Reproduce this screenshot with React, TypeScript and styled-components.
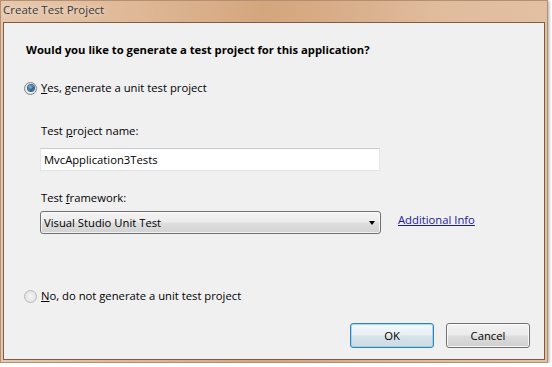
import styled, { createGlobalStyle } from "styled-components";

const GlobalStyle = createGlobalStyle`
  html, body {
    margin: 0;
    padding: 0;
    background: #ffffff;
  }
  body {
    font-family: "Open Sans", "Noto Sans", sans-serif;
    font-size: 11.25px;
    color: #000;
  }
`;

type RadioProps = {
  checked?: boolean;
};

const Radio = ({ checked }: RadioProps) => (
  <RadioCircle $checked={checked}>{checked && <RadioDot />}</RadioCircle>
);

const App = () => {
  return (
    <>
      <GlobalStyle />
      <Frame>
        <TitleBar>Create Test Project</TitleBar>
        <Client>
          <Question>
            Would you like to generate a test project for this application?
          </Question>
          <RadioRow $top={22}>
            <Radio checked />
            <span>
              <Key>Y</Key>es, generate a unit test project
            </span>
          </RadioRow>
          <Group>
            <FieldLabel $top={27}>
              Test <Key>p</Key>roject name:
            </FieldLabel>
            <TextBox>MvcApplication3Tests</TextBox>
            <FieldLabel $top={19}>
              Test <Key>f</Key>ramework:
            </FieldLabel>
            <ComboRow>
              <Combo>
                <span>Visual Studio Unit Test</span>
                <Arrow />
              </Combo>
              <InfoLink>Additional Info</InfoLink>
            </ComboRow>
          </Group>
          <RadioRow $top={54}>
            <Radio />
            <span>
              <Key>N</Key>o, do not generate a unit test project
            </span>
          </RadioRow>
          <ButtonBar>
            <Button $primary>OK</Button>
            <Button>Cancel</Button>
          </ButtonBar>
        </Client>
      </Frame>
    </>
  );
};

const Frame = styled.div`
  width: 548px;
  height: 363px;
  display: flex;
  flex-direction: column;
  box-sizing: border-box;
  background: linear-gradient(
    90deg,
    #e7c8ad 0%,
    #dfb896 25%,
    #d4a67e 48%,
    #d8ac87 60%,
    #e0bc9d 80%,
    #e2c0a2 100%
  );
  border: 1px solid #b58f72;
  box-shadow: 1px 1px 3px rgba(0, 0, 0, 0.35);
`;

const TitleBar = styled.div`
  height: 21px;
  padding-left: 2px;
  line-height: 17px;
  font-family: "Open Sans", "Noto Sans", sans-serif;
  font-size: 11.5px;
  color: #3a3a3a;
  text-shadow: 0 0 6px rgba(255, 255, 255, 0.8);
`;

const Client = styled.div`
  flex: 1;
  margin: 0 2px 2px 2px;
  display: flex;
  flex-direction: column;
  background: #f0f0f0;
  border: 1px solid #7d5d47;
  padding: 19px 14px 11px 22px;
`;

const Question = styled.div`
  font-weight: 700;
  line-height: 16px;
`;

const RadioRow = styled.div<{ $top: number }>`
  display: flex;
  align-items: center;
  gap: 4px;
  margin: ${(p) => p.$top}px 0 0 -2px;
  line-height: 16px;
`;

const RadioCircle = styled.span<{ $checked?: boolean }>`
  width: 11px;
  height: 11px;
  border-radius: 50%;
  display: flex;
  align-items: center;
  justify-content: center;
  border: 1px solid ${(p) => (p.$checked ? "#7f8284" : "#b8b9ba")};
  background: ${(p) =>
    p.$checked
      ? "radial-gradient(circle at 50% 50%, #ffffff 0%, #e8e8e8 70%, #d4d4d4 100%)"
      : "radial-gradient(circle at 50% 50%, #f4f4f4 0%, #e4e4e4 70%, #d8d8d8 100%)"};
`;

const RadioDot = styled.span`
  width: 6px;
  height: 6px;
  border-radius: 50%;
  background: radial-gradient(circle at 40% 35%, #7fc0e8 0%, #24689f 55%, #173f66 100%);
  box-shadow: 0 0 0 1px #3f5f7e;
`;

const Key = styled.span`
  text-decoration: underline;
`;

const Group = styled.div`
  display: flex;
  flex-direction: column;
  margin-left: 14px;
`;

const FieldLabel = styled.div<{ $top: number }>`
  margin: ${(p) => p.$top}px 0 0 1px;
  line-height: 16px;
`;

const TextBox = styled.div`
  width: 340px;
  height: 23px;
  box-sizing: border-box;
  margin-top: 9px;
  padding: 0 3px;
  background: #ffffff;
  border: 1px solid #e2e6eb;
  border-top-color: #c9ccd1;
  line-height: 21px;
`;

const ComboRow = styled.div`
  display: flex;
  align-items: center;
  gap: 17px;
  margin-top: 5px;
`;

const Combo = styled.div`
  width: 341px;
  height: 23px;
  box-sizing: border-box;
  display: flex;
  align-items: center;
  justify-content: space-between;
  padding: 0 5px 0 3px;
  border: 1px solid #707070;
  border-radius: 3px;
  background: linear-gradient(180deg, #f4f4f4 0%, #ececec 48%, #dedede 52%, #d2d2d2 100%);
  box-shadow: inset 0 0 0 1px rgba(255, 255, 255, 0.7);
`;

const Arrow = styled.span`
  width: 0;
  height: 0;
  border-left: 3.5px solid transparent;
  border-right: 3.5px solid transparent;
  border-top: 4px solid #000;
  margin-top: 1px;
`;

const InfoLink = styled.a`
  color: #1a1a9a;
  text-decoration: underline;
  cursor: pointer;
  margin-top: -6px;
`;

const ButtonBar = styled.div`
  margin-top: auto;
  display: flex;
  justify-content: flex-end;
  gap: 12px;
`;

const Button = styled.button<{ $primary?: boolean }>`
  width: 84px;
  height: 25px;
  font-family: "Open Sans", "Noto Sans", sans-serif;
  font-size: 11.25px;
  color: #000;
  border-radius: 3px;
  border: 1px solid ${(p) => (p.$primary ? "#3c7fb1" : "#707070")};
  background: ${(p) =>
    p.$primary
      ? "linear-gradient(180deg, #f3f8fb 0%, #e8eff3 48%, #d8e3ea 52%, #cddbe4 100%)"
      : "linear-gradient(180deg, #f2f2f2 0%, #ebebeb 48%, #dddddd 52%, #cfcfcf 100%)"};
  box-shadow: inset 0 0 0 1px
    ${(p) => (p.$primary ? "rgba(120, 210, 245, 0.7)" : "rgba(255, 255, 255, 0.8)")};
  padding: 0;
`;

export default App;
